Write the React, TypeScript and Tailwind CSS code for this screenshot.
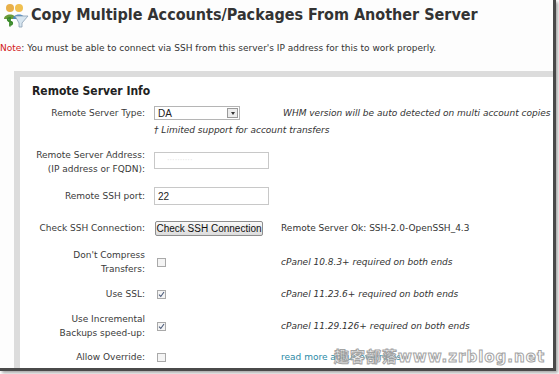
import React from "react";

const label = "text-right text-[#3a3a3a] leading-[14px]";
const note = "italic text-[#333] leading-[14px]";

function Checkbox({ checked = false }: { checked?: boolean }) {
	return (
		<div className="w-[9px] h-[9px] ml-[3px] border border-[#a9a9a9] bg-[#f4f4f4] flex items-center justify-center">
			{checked ? (
				<svg width="7" height="7" viewBox="0 0 7 7">
					<path d="M1 3.6 L2.8 5.5 L6 1" fill="none" stroke="#4a5a7a" strokeWidth="1.1" />
				</svg>
			) : null}
		</div>
	);
}

function PeopleIcon() {
	return (
		<svg width="26" height="26" viewBox="0 0 26 26">
			<circle cx="7" cy="6" r="4" fill="#e8b04a" />
			<path d="M1 17 C1 11 13 11 13 17 Z" fill="#6a9a3a" />
			<circle cx="16" cy="6" r="4" fill="#f0c050" />
			<path d="M10 17 C10 11 22 11 22 17 Z" fill="#4c8ac0" />
			<path d="M12 14 L25 14 L19 21 L19 25 L16 25 L16 21 Z" fill="#d8e6f0" stroke="#8aa0b4" strokeWidth="0.8" />
			<path d="M7 16 C4 16 4 19 7 19.5 C10 20 10 23 6.5 23 M7 15 L7 24.5" fill="none" stroke="#3a8a2a" strokeWidth="1.8" />
		</svg>
	);
}

export default function App() {
	return (
		<div className="w-[559px] h-[374px] bg-white relative overflow-hidden font-['DejaVu_Sans',sans-serif]">
			<div className="w-[556px] h-[371px] border-r-[3px] border-b-[3px] border-[#4a4a4a] shadow-[2px_2px_3px_rgba(0,0,0,0.35)] bg-[#fdfdfd] overflow-hidden">
				{/* Header */}
				<div className="flex items-center h-[30px] pl-[3px]">
					<PeopleIcon />
					<h1 className="ml-[2px] text-[16px] font-bold text-[#333] font-['DejaVu_Sans_Condensed','DejaVu_Sans',sans-serif]">
						Copy Multiple Accounts/Packages From Another Server
					</h1>
				</div>
				<p className="mt-[12px] text-[9px] leading-[12px] text-[#333]">
					<span className="text-[#d21a1a]">Note</span>: You must be able to connect via SSH from this server's IP address for this to work properly.
				</p>

				{/* Panel */}
				<div className="ml-[14px] mt-[17px] w-[600px] h-[320px] border-l-[6px] border-t-[6px] border-[#dcdcdc] bg-white text-[9px]">
					<h2 className="ml-[12px] pt-[7px] text-[12px] font-bold leading-[14px] text-[#222] font-['DejaVu_Sans_Condensed','DejaVu_Sans',sans-serif]">
						Remote Server Info
					</h2>

					<div className="grid grid-cols-[125px_118px_1fr] gap-x-[9px] items-center">
						{/* Type */}
						<div className={`${label} mt-[6px]`}>Remote Server Type:</div>
						<div className="mt-[6px] h-[18px] flex items-center">
							<div className="w-[86px] h-[14px] border border-[#b5b5b5] bg-white flex items-center justify-between pl-[3px] pr-[1px]">
								<span className="text-[10px] font-['Liberation_Sans',sans-serif] text-[#222]">DA</span>
								<div className="w-[11px] h-[10px] border border-[#9a9a9a] bg-[#ececec] flex items-center justify-center">
									<div className="w-0 h-0 border-l-[2.5px] border-r-[2.5px] border-t-[3px] border-l-transparent border-r-transparent border-t-[#333]" />
								</div>
							</div>
						</div>
						<div className={`${note} mt-[6px] ml-[2px] whitespace-nowrap`}>WHM version will be auto detected on multi account copies</div>

						{/* Limited */}
						<div />
						<div className={`${note} col-span-2 mt-[1px] h-[12px] leading-[12px] whitespace-nowrap`}>† Limited support for account transfers</div>

						{/* Address */}
						<div className={`${label} mt-[13px]`}>
							Remote Server Address:
							<br />
							(IP address or FQDN):
						</div>
						<div className="mt-[13px] h-[28px] flex items-start pt-[4px]">
							<div className="w-[115px] h-[17px] border border-[#c8c8c8] bg-white pl-[12px] flex items-center">
								<span className="text-[8px] text-[#e6e6e6]">··········</span>
							</div>
						</div>
						<div className="mt-[13px]" />

						{/* Port */}
						<div className={`${label} mt-[11px]`}>Remote SSH port:</div>
						<div className="mt-[11px] h-[18px] flex items-center">
							<div className="w-[115px] h-[18px] border border-[#c8c8c8] bg-white pl-[3px] flex items-center text-[10px] font-['Liberation_Sans',sans-serif] text-[#222]">
								22
							</div>
						</div>
						<div className="mt-[11px]" />

						{/* Check */}
						<div className={`${label} mt-[14px]`}>Check SSH Connection:</div>
						<div className="mt-[14px] h-[18px] flex items-center">
							<div className="w-[108px] h-[15px] ml-[1px] border border-[#8e8e8e] rounded-[2px] bg-gradient-to-b from-[#fafafa] to-[#dcdcdc] flex items-center justify-center text-[10px] font-['Liberation_Sans',sans-serif] text-[#111] whitespace-nowrap">
								Check SSH Connection
							</div>
						</div>
						<div className="mt-[14px] text-[#333] leading-[14px] whitespace-nowrap">Remote Server Ok: SSH-2.0-OpenSSH_4.3</div>

						{/* Compress */}
						<div className={`${label} mt-[11px]`}>
							Don't Compress
							<br />
							Transfers:
						</div>
						<div className="mt-[11px] h-[28px] flex items-center">
							<Checkbox />
						</div>
						<div className={`${note} mt-[11px]`}>cPanel 10.8.3+ required on both ends</div>

						{/* SSL */}
						<div className={`${label} mt-[10px]`}>Use SSL:</div>
						<div className="mt-[10px] h-[16px] flex items-center">
							<Checkbox checked />
						</div>
						<div className={`${note} mt-[10px]`}>cPanel 11.23.6+ required on both ends</div>

						{/* Incremental */}
						<div className={`${label} mt-[10px]`}>
							Use Incremental
							<br />
							Backups speed-up:
						</div>
						<div className="mt-[10px] h-[28px] flex items-center">
							<Checkbox checked />
						</div>
						<div className={`${note} mt-[10px]`}>cPanel 11.29.126+ required on both ends</div>

						{/* Override */}
						<div className={`${label} mt-[9px]`}>Allow Override:</div>
						<div className="mt-[9px] h-[16px] flex items-center">
							<Checkbox />
						</div>
						<div className="mt-[9px] text-[#2b8aa6] leading-[14px]">read more about overrides</div>
					</div>
				</div>
			</div>

			{/* Watermark */}
			<div className="absolute left-[334px] top-[348px] text-[15px] leading-[18px] tracking-[1px] font-bold text-white whitespace-nowrap font-['DejaVu_Sans','Noto_Sans_CJK_SC',sans-serif] [-webkit-text-stroke:1px_#9a9a9a] opacity-90">
				趣客部落www.zrblog.net
			</div>
		</div>
	);
}
